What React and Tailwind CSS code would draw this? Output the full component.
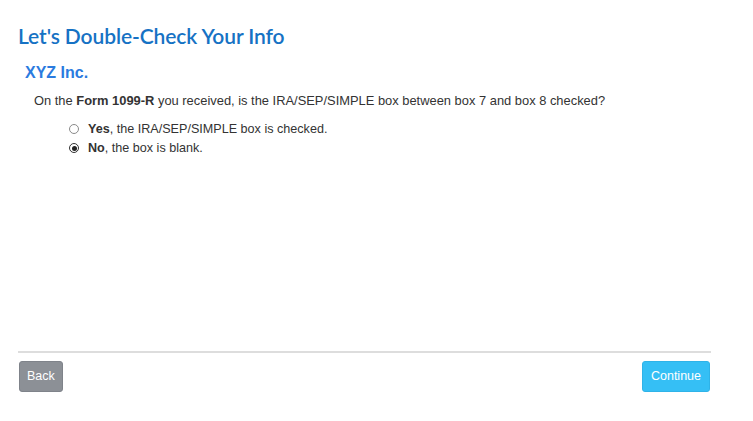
export default function App() {
  return (
    <div className="w-[753px] h-[421px] bg-white flex flex-col">
      <div className="px-[18px] pt-[24px] flex flex-col flex-1">
        <h1 className="text-[21px] leading-[24px] font-semibold text-[#1672c4] font-['Lato',sans-serif] tracking-[-0.1px]">
          Let's Double-Check Your Info
        </h1>
        <h2 className="mt-[15px] ml-[7px] text-[16px] leading-[20px] font-bold text-[#2b7bdf] font-['Liberation_Sans',Arial,sans-serif]">
          XYZ Inc.
        </h2>
        <p className="mt-[9px] ml-[16px] text-[12.9px] leading-[18px] text-[#333] font-['Liberation_Sans',Arial,sans-serif]">
          On the <b>Form 1099-R</b> you received, is the IRA/SEP/SIMPLE box between box 7 and box 8 checked?
        </p>
        <div className="mt-[11px] ml-[51px] flex flex-col gap-[3px] text-[12.6px] leading-[16px] text-[#333] font-['Liberation_Sans',Arial,sans-serif]">
          <label className="flex items-center gap-[9px]">
            <span className="w-[10px] h-[10px] rounded-full border border-[#8a8a8a] bg-white"></span>
            <span><b>Yes</b>, the IRA/SEP/SIMPLE box is checked.</span>
          </label>
          <label className="flex items-center gap-[9px]">
            <span className="w-[10px] h-[10px] rounded-full border border-[#333] bg-white flex items-center justify-center">
              <span className="w-[5px] h-[5px] rounded-full bg-[#222]"></span>
            </span>
            <span><b>No</b>, the box is blank.</span>
          </label>
        </div>
        <div className="flex-1"></div>
        <div className="mr-[24px] h-[2px] bg-[#dddddd]"></div>
        <div className="mr-[24px] mt-[8px] mb-[29px] flex justify-between font-['Liberation_Sans',Arial,sans-serif]">
          <button className="ml-[1px] h-[31px] px-[7px] rounded-[3px] bg-[#8c9096] border border-[#7f838a] text-white text-[12.5px]">
            Back
          </button>
          <button className="h-[31px] px-[8px] rounded-[3px] bg-[#35bff5] border border-[#2fb3e8] text-white text-[12.5px] mr-[1px]">
            Continue
          </button>
        </div>
      </div>
    </div>
  );
}
